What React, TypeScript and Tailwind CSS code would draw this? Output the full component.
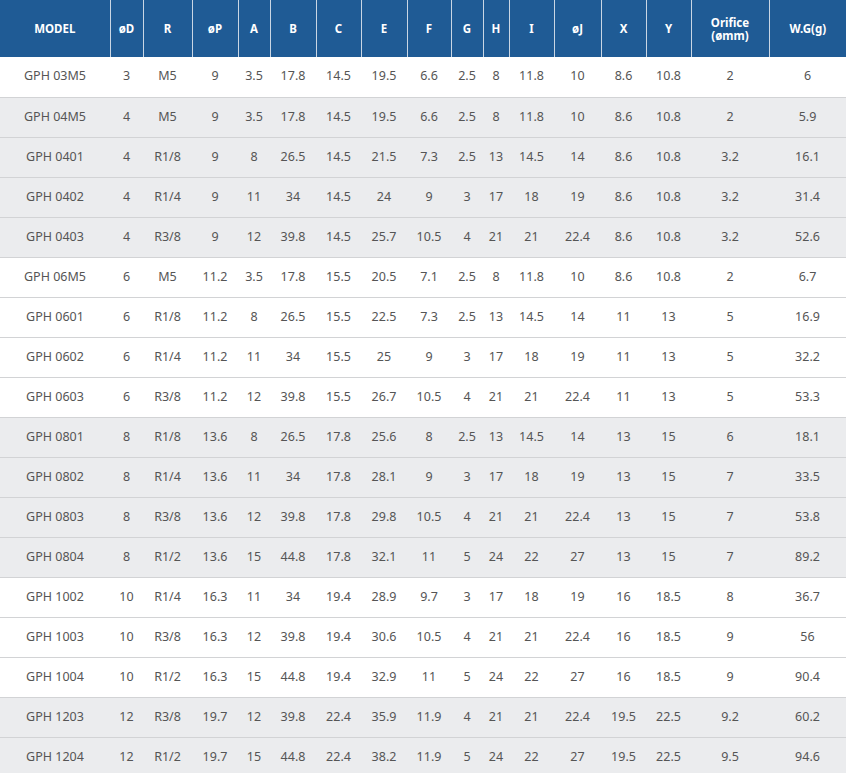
import React from 'react';

type Row = string[];

const COLUMNS = [
  { label: 'MODEL', width: 110 },
  { label: 'øD', width: 33 },
  { label: 'R', width: 49 },
  { label: 'øP', width: 46 },
  { label: 'A', width: 32 },
  { label: 'B', width: 46 },
  { label: 'C', width: 45 },
  { label: 'E', width: 46 },
  { label: 'F', width: 44 },
  { label: 'G', width: 32 },
  { label: 'H', width: 26 },
  { label: 'I', width: 45 },
  { label: 'øJ', width: 47 },
  { label: 'X', width: 45 },
  { label: 'Y', width: 45 },
  { label: 'Orifice\n(ømm)', width: 78 },
  { label: 'W.G(g)', width: 77 },
];

// 그룹별 배경 (0 = 흰색, 1 = 회색)
const ROWS: { group: number; cells: Row }[] = [
  { group: 0, cells: ['GPH 03M5', '3', 'M5', '9', '3.5', '17.8', '14.5', '19.5', '6.6', '2.5', '8', '11.8', '10', '8.6', '10.8', '2', '6'] },
  { group: 1, cells: ['GPH 04M5', '4', 'M5', '9', '3.5', '17.8', '14.5', '19.5', '6.6', '2.5', '8', '11.8', '10', '8.6', '10.8', '2', '5.9'] },
  { group: 1, cells: ['GPH 0401', '4', 'R1/8', '9', '8', '26.5', '14.5', '21.5', '7.3', '2.5', '13', '14.5', '14', '8.6', '10.8', '3.2', '16.1'] },
  { group: 1, cells: ['GPH 0402', '4', 'R1/4', '9', '11', '34', '14.5', '24', '9', '3', '17', '18', '19', '8.6', '10.8', '3.2', '31.4'] },
  { group: 1, cells: ['GPH 0403', '4', 'R3/8', '9', '12', '39.8', '14.5', '25.7', '10.5', '4', '21', '21', '22.4', '8.6', '10.8', '3.2', '52.6'] },
  { group: 0, cells: ['GPH 06M5', '6', 'M5', '11.2', '3.5', '17.8', '15.5', '20.5', '7.1', '2.5', '8', '11.8', '10', '8.6', '10.8', '2', '6.7'] },
  { group: 0, cells: ['GPH 0601', '6', 'R1/8', '11.2', '8', '26.5', '15.5', '22.5', '7.3', '2.5', '13', '14.5', '14', '11', '13', '5', '16.9'] },
  { group: 0, cells: ['GPH 0602', '6', 'R1/4', '11.2', '11', '34', '15.5', '25', '9', '3', '17', '18', '19', '11', '13', '5', '32.2'] },
  { group: 0, cells: ['GPH 0603', '6', 'R3/8', '11.2', '12', '39.8', '15.5', '26.7', '10.5', '4', '21', '21', '22.4', '11', '13', '5', '53.3'] },
  { group: 1, cells: ['GPH 0801', '8', 'R1/8', '13.6', '8', '26.5', '17.8', '25.6', '8', '2.5', '13', '14.5', '14', '13', '15', '6', '18.1'] },
  { group: 1, cells: ['GPH 0802', '8', 'R1/4', '13.6', '11', '34', '17.8', '28.1', '9', '3', '17', '18', '19', '13', '15', '7', '33.5'] },
  { group: 1, cells: ['GPH 0803', '8', 'R3/8', '13.6', '12', '39.8', '17.8', '29.8', '10.5', '4', '21', '21', '22.4', '13', '15', '7', '53.8'] },
  { group: 1, cells: ['GPH 0804', '8', 'R1/2', '13.6', '15', '44.8', '17.8', '32.1', '11', '5', '24', '22', '27', '13', '15', '7', '89.2'] },
  { group: 0, cells: ['GPH 1002', '10', 'R1/4', '16.3', '11', '34', '19.4', '28.9', '9.7', '3', '17', '18', '19', '16', '18.5', '8', '36.7'] },
  { group: 0, cells: ['GPH 1003', '10', 'R3/8', '16.3', '12', '39.8', '19.4', '30.6', '10.5', '4', '21', '21', '22.4', '16', '18.5', '9', '56'] },
  { group: 0, cells: ['GPH 1004', '10', 'R1/2', '16.3', '15', '44.8', '19.4', '32.9', '11', '5', '24', '22', '27', '16', '18.5', '9', '90.4'] },
  { group: 1, cells: ['GPH 1203', '12', 'R3/8', '19.7', '12', '39.8', '22.4', '35.9', '11.9', '4', '21', '21', '22.4', '19.5', '22.5', '9.2', '60.2'] },
  { group: 1, cells: ['GPH 1204', '12', 'R1/2', '19.7', '15', '44.8', '22.4', '38.2', '11.9', '5', '24', '22', '27', '19.5', '22.5', '9.5', '94.6'] },
];

export default function App() {
  return (
    <div className="w-[846px] bg-white font-['Noto_Sans','Open_Sans',sans-serif]">
      <table className="w-[846px] table-fixed border-collapse">
        <colgroup>
          {COLUMNS.map((col, i) => (
            <col key={i} style={{ width: col.width }} />
          ))}
        </colgroup>
        <thead>
          <tr className="h-[57px] bg-[#1f5b95]">
            {COLUMNS.map((col, i) => (
              <th
                key={i}
                className={`p-0 text-center text-[11.5px] font-bold leading-[13px] text-white whitespace-pre-line ${
                  i > 0 ? 'border-l border-[#c9d6e4]' : ''
                }`}
              >
                {col.label}
              </th>
            ))}
          </tr>
        </thead>
        <tbody>
          {ROWS.map((row, r) => (
            <tr
              key={r}
              className={`h-[40px] border-b border-[#d2d3d5] ${row.group === 1 ? 'bg-[#ebecee]' : 'bg-white'}`}
            >
              {row.cells.map((cell, c) => (
                <td key={c} className="p-0 text-center text-[12.5px] text-[#555]">
                  {cell}
                </td>
              ))}
            </tr>
          ))}
        </tbody>
      </table>
    </div>
  );
}
